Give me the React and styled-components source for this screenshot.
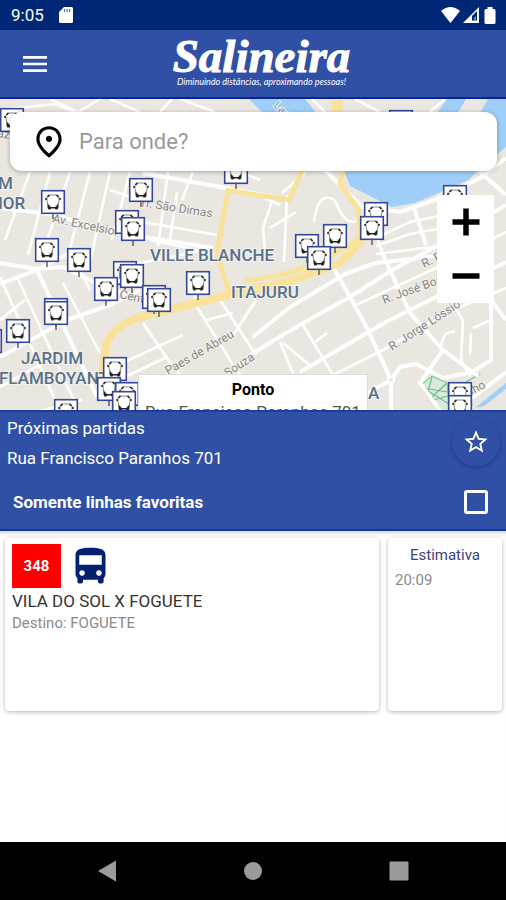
import React, { useState } from 'react';
import styled, { createGlobalStyle } from 'styled-components';
import {
  MdMenu,
  MdOutlinePlace,
  MdStarBorder,
  MdStar,
  MdDirectionsBus,
} from 'react-icons/md';

const GlobalStyle = createGlobalStyle`
  * {
    box-sizing: border-box;
  }
  body {
    margin: 0;
    background: #fff;
    font-family: Roboto, "Noto Sans", sans-serif;
  }
  button, input {
    font-family: inherit;
  }
`;

const Screen = styled.div`
  display: flex;
  flex-direction: column;
  min-height: 100vh;
`;

const StatusBar = styled.div`
  display: flex;
  align-items: center;
  gap: 15px;
  height: 30px;
  padding: 0 8px 0 11px;
  background: #002776;
  color: #fff;
  font-size: 17px;
`;

const StatusIcons = styled.div`
  display: flex;
  align-items: center;
  gap: 3px;
  margin-left: auto;
`;

const Header = styled.header`
  display: grid;
  grid-template-columns: 56px 1fr 46px;
  align-items: center;
  height: 69px;
  padding-left: 7px;
  background: #2f50a5;
  border-bottom: 2px solid #0a2396;
`;

const IconButton = styled.button`
  display: flex;
  align-items: center;
  justify-content: center;
  padding: 0;
  border: none;
  background: none;
  color: #fff;
  cursor: pointer;
`;

const Brand = styled.div`
  display: flex;
  flex-direction: column;
  align-items: center;
  padding-bottom: 4px;
  color: #fff;
`;

const BrandName = styled.div`
  font: italic bold 47px/40px 'Liberation Serif', serif;
  -webkit-text-stroke: 1px #fff;
`;

const BrandSlogan = styled.div`
  font: italic 9px/12px Lato, sans-serif;
  white-space: nowrap;
`;

const MapArea = styled.main`
  position: relative;
  flex: 1 1 0;
  min-height: 240px;
  overflow: hidden;
  background: #ebe9e3;
`;

const MapCanvas = styled.svg`
  position: absolute;
  inset: 0;
  width: 100%;
  height: 100%;

  text {
    font-family: Roboto, sans-serif;
    paint-order: stroke;
    stroke: #f4f2ee;
    stroke-width: 2px;
  }
`;

const SearchBox = styled.label`
  position: absolute;
  top: 13px;
  left: 10px;
  right: 9px;
  display: flex;
  align-items: center;
  gap: 11px;
  height: 59px;
  padding: 0 20px;
  border-radius: 12px;
  background: #fff;
  box-shadow: 0 1px 5px rgba(0, 0, 0, 0.3);
`;

const SearchInput = styled.input`
  flex: 1;
  min-width: 0;
  padding: 0;
  border: none;
  outline: none;
  background: none;
  color: #333;
  font-size: 22px;

  &::placeholder {
    color: #999;
    opacity: 1;
  }
`;

const ZoomControls = styled.div`
  position: absolute;
  top: 96px;
  right: 12px;
  display: flex;
  flex-direction: column;
  width: 57px;
  background: #fff;
`;

const ZoomButton = styled(IconButton)`
  height: 54px;
  color: #000;
`;

const StopPopup = styled.div`
  position: absolute;
  bottom: 0;
  left: 50%;
  width: 230px;
  height: 36px;
  padding-top: 4px;
  overflow: hidden;
  transform: translateX(-50%);
  background: #fff;
  border: 1px solid #ddd;
  border-bottom: none;
  color: #555;
  font-size: 17px;
  line-height: 22px;
  text-align: center;
  white-space: nowrap;
`;

const PopupTitle = styled.strong`
  display: block;
  color: #000;
  font-size: 16px;
`;

const Panel = styled.section`
  display: flex;
  flex-direction: column;
  gap: 8px;
  height: 121px;
  padding: 0 6px 0 7px;
  background: #2f50a5;
  border-top: 2px solid #1d3f9c;
  border-bottom: 2px solid #0d3a98;
  color: #fff;
`;

const StopRow = styled.div`
  display: flex;
  align-items: center;
  justify-content: space-between;
`;

const StopText = styled.p`
  margin: 0;
  padding-top: 2px;
  font-size: 17px;
  line-height: 28px;
`;

const FavoriteButton = styled(IconButton)`
  width: 48px;
  height: 48px;
  border-radius: 50%;
  box-shadow: 0 2px 4px rgba(0, 20, 90, 0.3);
`;

const FilterRow = styled.label`
  display: flex;
  align-items: center;
  justify-content: space-between;
  height: 44px;
  padding: 0 12px 0 6px;
  font-size: 17px;
  font-weight: bold;
`;

const CheckBox = styled.input`
  width: 24px;
  height: 24px;
  margin: 0;
  appearance: none;
  border: 3px solid #fff;
  border-radius: 3px;

  &:checked {
    background: #fff;
  }
`;

const Departures = styled.section`
  flex: 1 1 0;
  background: #fff;
  box-shadow: inset 0 5px 4px -3px rgba(0, 0, 0, 0.18);
`;

const Departure = styled.div`
  display: grid;
  grid-template-columns: 1fr 114px;
  gap: 9px;
  min-height: 187px;
  padding: 7px 4px 7px 5px;
`;

const Card = styled.article`
  padding: 6px 7px;
  border-radius: 4px;
  background: #fff;
  box-shadow: 0 1px 4px rgba(0, 0, 0, 0.3);
`;

const LineHead = styled.div`
  display: flex;
  align-items: center;
  gap: 7px;
  height: 44px;
  color: #05206f;
`;

const LineNumber = styled.div`
  display: flex;
  align-items: center;
  justify-content: center;
  width: 49px;
  height: 44px;
  background: #f00;
  color: #fff;
  font-size: 15px;
  font-weight: bold;
`;

const LineName = styled.h2`
  margin: 2px 0 0;
  color: #333;
  font-size: 17px;
  font-weight: 400;
  line-height: 22px;
`;

const Muted = styled.p`
  margin: 0;
  color: #8a8a8a;
  font-size: 15px;
  line-height: 22px;
`;

const EstimateTitle = styled.h3`
  margin: 0 0 3px;
  color: #3c4380;
  font-size: 15px;
  font-weight: 400;
  line-height: 22px;
  text-align: center;
`;

const NavBar = styled.nav`
  display: flex;
  align-items: center;
  justify-content: space-around;
  height: 58px;
  padding: 0 34px;
  background: #000;
`;

const NavButton = styled(IconButton)`
  width: 48px;
  height: 48px;
`;

// Map geometry, drawn in a 506 x 311 space that starts at y = 99
const WIDE_ROADS = [
  'M0 208L50 214L113 232L213 248',
  'M143 173L226 188L289 200',
  'M0 263L37 269L63 267L110 290L170 305',
  'M0 284L37 270L75 250',
  'M0 357L67 320L110 305L140 290',
  'M37 270L97 397',
  'M253 353L303 323L350 297L392 270L437 246L506 205',
  'M225 377L253 353',
  'M253 337L290 307L345 274L375 263L437 256',
  'M300 372L386 322L436 297L506 262',
  'M333 267L350 297L368 330L391 380V411',
  'M383 255L410 313L443 350L478 376',
  'M391 380L345 405',
  'M391 380L400 367L416 364L443 378L472 372L491 360V300L506 320',
  'M443 350L420 383L440 411',
  'M323 168L345 190L362 207L400 212L440 198L480 178L506 158',
  'M413 205L426 245',
  'M480 172L506 195',
  'M455 411L506 372',
];

const NARROW_ROADS = [
  'M30 172L5 240', 'M50 172L28 255', 'M70 172L40 262', 'M90 172L67 260',
  'M110 172L90 262', 'M130 172L112 240', 'M168 172L158 246', 'M193 172L182 200',
  'M143 222L217 235', 'M150 240L215 254', 'M110 190L140 200', 'M177 192L170 240',
  'M0 277L60 411', 'M17 277L77 407', 'M63 283L100 353', 'M0 387L40 365',
  'M0 320L25 300', 'M70 250L90 290', 'M130 265L205 250', 'M143 323L173 367L180 374',
  'M107 370L183 335', 'M127 376L165 358', 'M197 307L230 360L240 375',
  'M207 320L233 313', 'M220 300L256 355', 'M256 300L230 340', 'M190 270L197 307',
  'M280 342L293 373', 'M283 343L312 367', 'M303 325L333 375', 'M315 342L327 333',
  'M333 375L383 350L453 310L506 288', 'M356 305L436 268L506 232',
  'M376 238L410 222L443 215', 'M376 246L410 234L443 228', 'M376 254L440 246',
  'M450 300L463 320L461 360L470 376', 'M471 333L470 355', 'M473 328L491 320',
  'M441 349Q442 330 455 332', 'M273 198L263 228L266 262', 'M287 195L284 262',
  'M265 198L280 205', 'M270 228L296 212', 'M305 173L282 193', 'M260 180L240 172',
  'M314 222Q318 190 335 200Q345 228 358 220', 'M438 198L450 240',
  'M385 260L380 246L376 236', 'M0 110L55 104L75 112', 'M50 99L78 112L100 99',
  'M110 99L140 112', 'M160 112L172 99', 'M180 99L215 112', 'M312 99L325 112',
  'M355 99L380 112', 'M430 112L445 99', 'M82 400L40 411',
];

const PRIMARY_ROADS = [
  'M228 190L217 254L229 292',
  'M226 190L289 200L302 171',
  'M343 170L340 184L359 210L359 238L320 263L280 275L245 281',
  'M102 375L106 346Q112 326 140 317L228 295L290 281L340 263L362 240',
];

const AREAS = [
  { x: -2, y: 189, name: 'M' },
  { x: -2, y: 209, name: 'IOR' },
  { x: 150, y: 261, name: 'VILLE BLANCHE' },
  { x: 231, y: 298, name: 'ITAJURU' },
  { x: 21, y: 364, name: 'JARDIM' },
  { x: -1, y: 384, name: 'FLAMBOYANT' },
  { x: 368, y: 399, name: 'A' },
];

const STREETS = [
  { x: 52, y: 222, angle: 12, name: 'Av. Excelsior' },
  { x: 139, y: 206, angle: 9, name: 'Tr. São Dimas' },
  { x: 119, y: 298, angle: 12, name: 'Cent' },
  { x: 168, y: 375, angle: -30, name: 'Paes de Abreu' },
  { x: 214, y: 386, angle: -33, name: 'de Souza' },
  { x: 424, y: 268, angle: -26, name: 'R. Ru' },
  { x: 384, y: 304, angle: -20, name: 'R. José Bonif' },
  { x: 392, y: 351, angle: -33, name: 'R. Jorge Lóssio' },
  { x: 466, y: 398, angle: -28, name: 'inho' },
  { x: -3, y: 137, angle: 8, name: 'az' },
];

const STOPS = [
  [12, 120], [53, 202], [141, 190], [236, 172], [401, 122], [127, 222],
  [133, 229], [47, 250], [79, 260], [125, 273], [132, 276], [106, 289],
  [154, 297], [159, 300], [198, 283], [56, 310], [56, 313], [18, 331],
  [-10, 341], [115, 369], [109, 389], [127, 394], [124, 403], [66, 411],
  [455, 197], [376, 214], [372, 228], [335, 236], [307, 246], [319, 258],
  [460, 394], [460, 407],
];

const StopPin = ({ x, y }) => (
  <g transform={`translate(${x} ${y})`}>
    <path d="M0 12V17" stroke="#555" strokeWidth="1.4" />
    <rect x="-11.3" y="-11.3" width="22.6" height="22.6" fill="#fff" stroke="#34479a" strokeWidth="1.6" />
    <path d="M-4.5 -7H4.500L6 -5V-1L4.500 4H-4.500L-6 -1V-5Z" fill="#fff" stroke="#888" strokeWidth="1" />
    <path d="M-5.5 -5L-3.500 -7M5.5 -5L3.500 -7M-7 -4V-2M7 -4V-2" stroke="#222" strokeWidth="1.500" />
    <path d="M-5.500 1.500L-3 4.500H3L5.500 1.500V5.500L4.500 7.500H2.500L2 6.500H-2L-2.500 7.500H-4.500L-5.500 5.500Z" fill="#222" />
    <path d="M-2.500 3H2.500V5H-2.500Z" fill="#fff" />
  </g>
);

const CityMap = () => (
  <MapCanvas viewBox="0 99 506 311" preserveAspectRatio="xMidYMid slice" role="img" aria-label="Mapa de pontos">
    <rect y="99" width="506" height="311" fill="#eae7e0" />
    <g fill="#9fcff8">
      <path d="M249 99H305L330 130L318 160L300 150Z" />
      <path d="M447 99H466L448 130H425Z" />
      <path d="M342 165L350 186L392 207L415 203L441 192L468 180L484 165L506 147V99H488L470 130L400 160Z" />
      <path d="M475 408L506 383V389L484 406Z" />
    </g>
    <path d="M420 386L432 376L447 383L450 411H438Z" fill="#d7eadb" stroke="#72bd87" strokeWidth="1" />
    <path d="M422 388L448 392M432 377L428 391L449 404M447 383L432 397M430 401L448 396M466 382L480 374" fill="none" stroke="#72bd87" strokeWidth="1.2" />
    <g fill="none" stroke="#fff" strokeLinejoin="round">
      {NARROW_ROADS.map((d) => <path key={d} d={d} strokeWidth="2.6" />)}
      {WIDE_ROADS.map((d) => <path key={d} d={d} strokeWidth="4" />)}
    </g>
    <g fill="none" stroke="#f9e29a" strokeLinejoin="round">
      {PRIMARY_ROADS.map((d, idx) => <path key={d} d={d} strokeWidth={idx === 3 ? 8 : 5} />)}
      <path d="M337 99V114" strokeWidth="11" />
    </g>
    <circle cx="391" cy="380" r="3" fill="#eae7e0" stroke="#fff" strokeWidth="2" />
    {STREETS.map(({ x, y, angle, name }) => (
      <text key={name} x={x} y={y} transform={`rotate(${angle} ${x} ${y})`} fill="#858585" fontSize="12">
        {name}
      </text>
    ))}
    <text x="273" y="106" transform="rotate(45 273 106)" fill="#6f9cc4" fontSize="11">Lago</text>
    {AREAS.map(({ x, y, name }) => (
      <text key={name} x={x} y={y} fill="#58708a" fontSize="17" fontWeight="500">
        {name}
      </text>
    ))}
    {STOPS.map(([x, y]) => <StopPin key={`${x},${y}`} x={x} y={y} />)}
  </MapCanvas>
);

const App = () => {
  const [search, setSearch] = useState('');
  const [favorite, setFavorite] = useState(false);
  const [onlyFavorites, setOnlyFavorites] = useState(false);

  return (
    <Screen>
      <GlobalStyle />
      <StatusBar>
        <span>9:05</span>
        <svg width="14" height="16" viewBox="0 0 14 16" fill="#fff">
          <path d="M5 0H12.5Q14 0 14 1.500V14.500Q14 16 12.500 16H1.500Q0 16 0 14.500V5Z" />
          <path d="M5.500 2V5M8 2V5M10.500 2V5" stroke="#5a70a8" strokeWidth="1.200" />
        </svg>
        <StatusIcons>
          <svg width="19" height="16" viewBox="0 0 19 16" fill="#fff">
            <path d="M0 4Q9.500 -4 19 4L9.500 16Z" />
          </svg>
          <svg width="16" height="16" viewBox="0 0 16 16">
            <path d="M0 16L16 0V16Z" fill="#fff" />
            <path d="M9 13.500V9L14 4V13.500Z" fill="#002776" />
            <path d="M10.500 12L13 9V13Z" fill="#8b9cc8" />
          </svg>
          <svg width="16" height="17" viewBox="0 0 16 17" fill="#fff">
            <path d="M5.500 0H10.500V2H12Q13.500 2 13.500 3.500V15.500Q13.500 17 12 17H4Q2.500 17 2.500 15.500V3.500Q2.500 2 4 2H5.500Z" />
          </svg>
        </StatusIcons>
      </StatusBar>

      <Header>
        <IconButton aria-label="Menu">
          <MdMenu size={32} />
        </IconButton>
        <Brand>
          <BrandName>Salineira</BrandName>
          <BrandSlogan>Diminuindo distâncias, aproximando pessoas!</BrandSlogan>
        </Brand>
      </Header>

      <MapArea>
        <CityMap />
        <SearchBox>
          <MdOutlinePlace size={38} color="#000" />
          <SearchInput
            type="text"
            aria-label="Para onde?"
            placeholder="Para onde?"
            value={search}
            onChange={(e) => setSearch(e.target.value)}
          />
        </SearchBox>
        <ZoomControls>
          <ZoomButton aria-label="Aumentar zoom">
            <svg width="28" height="28" viewBox="0 0 28 28">
              <path d="M0.500 14H27.500M14 0.500V27.500" stroke="#000" strokeWidth="5.500" />
            </svg>
          </ZoomButton>
          <ZoomButton aria-label="Diminuir zoom">
            <svg width="28" height="28" viewBox="0 0 28 28">
              <path d="M0.500 14H27.500" stroke="#000" strokeWidth="5.500" />
            </svg>
          </ZoomButton>
        </ZoomControls>
        <StopPopup>
          <PopupTitle>Ponto</PopupTitle>
          Rua Francisco Paranhos 701
        </StopPopup>
      </MapArea>

      <Panel>
        <StopRow>
          <div>
            <StopText>Próximas partidas</StopText>
            <StopText>Rua Francisco Paranhos 701</StopText>
          </div>
          <FavoriteButton aria-label="Favoritar ponto" onClick={() => setFavorite(!favorite)}>
            {favorite ? <MdStar size={28} /> : <MdStarBorder size={28} />}
          </FavoriteButton>
        </StopRow>
        <FilterRow>
          Somente linhas favoritas
          <CheckBox
            type="checkbox"
            checked={onlyFavorites}
            onChange={(e) => setOnlyFavorites(e.target.checked)}
          />
        </FilterRow>
      </Panel>

      <Departures>
        <Departure>
          <Card>
            <LineHead>
              <LineNumber>348</LineNumber>
              <MdDirectionsBus size={45} />
            </LineHead>
            <LineName>VILA DO SOL X FOGUETE</LineName>
            <Muted>Destino: FOGUETE</Muted>
          </Card>
          <Card>
            <EstimateTitle>Estimativa</EstimateTitle>
            <Muted>20:09</Muted>
          </Card>
        </Departure>
      </Departures>

      <NavBar>
        <NavButton aria-label="Voltar">
          <svg width="20" height="22" viewBox="0 0 20 22" fill="#9b9b9b">
            <path d="M1 11L19 0.500V21.500Z" />
          </svg>
        </NavButton>
        <NavButton aria-label="Início">
          <svg width="20" height="20" viewBox="0 0 20 20" fill="#9b9b9b">
            <circle cx="10" cy="10" r="9" />
          </svg>
        </NavButton>
        <NavButton aria-label="Recentes">
          <svg width="20" height="20" viewBox="0 0 20 20" fill="#9b9b9b">
            <rect x="0.500" y="0.500" width="19" height="19" rx="1" />
          </svg>
        </NavButton>
      </NavBar>
    </Screen>
  );
};

export default App;
